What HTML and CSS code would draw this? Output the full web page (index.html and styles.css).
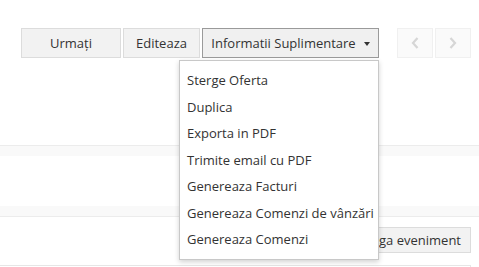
FILE: index.html
```html
<!DOCTYPE html>
<html>
<head>
<meta charset="utf-8">
<link rel="stylesheet" href="styles.css">
</head>
<body>
<div class="page">
  <div class="toolbar">
    <button class="btn btn-urm">Urmați</button>
    <button class="btn btn-edit">Editeaza</button>
    <div class="dd">
      <button class="btn btn-info">Informatii Suplimentare <span class="caret"></span></button>
      <ul class="menu">
        <li>Sterge Oferta</li>
        <li>Duplica</li>
        <li>Exporta in PDF</li>
        <li>Trimite email cu PDF</li>
        <li>Genereaza Facturi</li>
        <li>Genereaza Comenzi de vânzări</li>
        <li>Genereaza Comenzi</li>
      </ul>
    </div>
    <div class="pager">
      <button class="nav"><svg width="8" height="12" viewBox="0 0 8 12"><path d="M6.5 1 L2 6 L6.5 11" fill="none" stroke="#d6d6d6" stroke-width="2.2"/></svg></button>
      <button class="nav"><svg width="8" height="12" viewBox="0 0 8 12"><path d="M1.5 1 L6 6 L1.5 11" fill="none" stroke="#d6d6d6" stroke-width="2.2"/></svg></button>
    </div>
  </div>
  <div class="band band1"></div>
  <div class="band band2"></div>
  <div class="actions">
    <button class="btn btn-add">Adauga eveniment</button>
  </div>
  <div class="bottom"></div>
</div>
</body>
</html>
```
FILE: styles.css
```css
html, body {
  margin: 0;
  padding: 0;
  background: #fff;
}
body {
  font-family: "Open Sans", "Liberation Sans", sans-serif;
  font-size: 13px;
  color: #333;
  width: 479px;
  height: 267px;
  overflow: hidden;
}
.page {
  position: relative;
}
.toolbar {
  display: flex;
  align-items: flex-start;
  padding: 28px 0 0 21px;
  gap: 2px;
  height: 30px;
}
.btn {
  font-family: inherit;
  font-size: 13px;
  color: #333;
  background: #f2f2f2;
  border: 1px solid #dcdcdc;
  height: 30px;
  padding: 0;
  margin: 0;
  box-sizing: border-box;
  cursor: pointer;
}
.btn-urm { width: 100px; }
.btn-edit { width: 77px; }
.dd { position: relative; }
.btn-info {
  width: 177px;
  border-color: #9a9a9a;
  background: #f0f0f0;
  display: flex;
  align-items: center;
  justify-content: center;
  gap: 8px;
}
.caret {
  display: inline-block;
  width: 0;
  height: 0;
  border-left: 3.5px solid transparent;
  border-right: 3.5px solid transparent;
  border-top: 4px solid #333;
  margin-top: 1px;
}
.menu {
  position: absolute;
  top: 32px;
  right: 0;
  width: 200px;
  box-sizing: border-box;
  margin: 0;
  padding: 6px 0 6px 0;
  list-style: none;
  background: #fff;
  border: 1px solid #c8c8c8;
  box-shadow: 0 2px 5px rgba(0,0,0,0.18);
  z-index: 10;
}
.menu li {
  padding: 4px 7px;
  line-height: 18.5px;
  white-space: nowrap;
  color: #333;
}
.pager {
  display: flex;
  gap: 2px;
  margin-left: 16px;
}
.nav {
  width: 36px;
  height: 30px;
  background: #fafafa;
  border: 1px solid #f0f0f0;
  display: flex;
  align-items: center;
  justify-content: center;
  padding: 0;
}
.band {
  background: #f9f9f9;
  height: 10px;
}
.band1 {
  margin-top: 87px;
  border-top: 1px solid #ececec;
}
.band2 {
  margin-top: 50px;
  border-bottom: 1px solid #ececec;
}
.actions {
  display: flex;
  justify-content: flex-end;
  padding: 10px 8px 0 0;
  height: 26px;
}
.btn-add {
  height: 26px;
  padding: 0 9px;
}
.bottom {
  margin-top: 12px;
  width: 470px;
  height: 10px;
  border-top: 1px solid #e6e6e6;
  border-right: 1px solid #e6e6e6;
}
```
